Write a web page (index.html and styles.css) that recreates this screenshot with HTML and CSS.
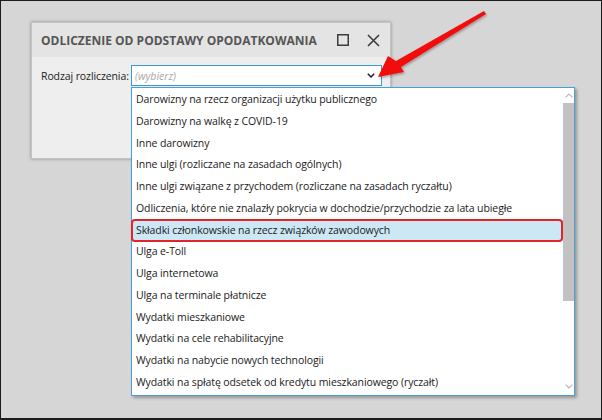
FILE: index.html
```html
<!DOCTYPE html>
<html lang="pl">
<head>
<meta charset="utf-8">
<title>Odliczenie od podstawy opodatkowania</title>
<link rel="stylesheet" href="styles.css">
</head>
<body>
<div class="screen">
  <div class="dialog">
    <div class="titlebar">
      <span class="title">ODLICZENIE OD PODSTAWY OPODATKOWANIA</span>
      <span class="controls">
        <svg width="12" height="12" viewBox="0 0 12 12"><rect x="0.75" y="0.75" width="10.5" height="10.5" fill="none" stroke="#3c3c3c" stroke-width="1.5"/></svg>
        <svg width="13" height="13" viewBox="0 0 13 13"><path d="M1 1 L12 12 M12 1 L1 12" stroke="#3c3c3c" stroke-width="1.6" fill="none"/></svg>
      </span>
    </div>
    <div class="form-row">
      <span class="label">Rodzaj rozliczenia:</span>
      <div class="combo">
        <span class="placeholder">(wybierz)</span>
        <svg class="chevron" width="8" height="5" viewBox="0 0 8 5"><path d="M0.8 0.8 L4 4 L7.2 0.8" stroke="#222" stroke-width="1.5" fill="none"/></svg>
      </div>
    </div>
  </div>

  <div class="dropdown">
    <ul class="items">
      <li>Darowizny na rzecz organizacji użytku publicznego</li>
      <li>Darowizny na walkę z COVID-19</li>
      <li>Inne darowizny</li>
      <li>Inne ulgi (rozliczane na zasadach ogólnych)</li>
      <li>Inne ulgi związane z przychodem (rozliczane na zasadach ryczałtu)</li>
      <li>Odliczenia, które nie znalazły pokrycia w dochodzie/przychodzie za lata ubiegłe</li>
      <li class="selected">Składki członkowskie na rzecz związków zawodowych</li>
      <li>Ulga e-Toll</li>
      <li>Ulga internetowa</li>
      <li>Ulga na terminale płatnicze</li>
      <li>Wydatki mieszkaniowe</li>
      <li>Wydatki na cele rehabilitacyjne</li>
      <li>Wydatki na nabycie nowych technologii</li>
      <li>Wydatki na spłatę odsetek od kredytu mieszkaniowego (ryczałt)</li>
    </ul>
    <div class="scrollbar">
      <svg class="sb-arrow" width="8" height="5" viewBox="0 0 8 5"><path d="M0.6 4.4 L4 1 L7.4 4.4" stroke="#b8b8b8" stroke-width="1.2" fill="none"/></svg>
      <div class="thumb"></div>
      <svg class="sb-arrow down" width="8" height="5" viewBox="0 0 8 5"><path d="M0.6 0.6 L4 4 L7.4 0.6" stroke="#b8b8b8" stroke-width="1.2" fill="none"/></svg>
    </div>
  </div>

  <svg class="arrow" width="602" height="420" viewBox="0 0 602 420">
    <defs>
      <filter id="sh" x="-10%" y="-10%" width="130%" height="130%">
        <feDropShadow dx="1" dy="1.5" stdDeviation="1.2" flood-color="#000" flood-opacity="0.3"/>
      </filter>
    </defs>
    <polygon points="378,77 388,56 396,61 484,11 486,14 401,67 404,72" fill="#f20d0d" filter="url(#sh)"/>
  </svg>
</div>
</body>
</html>
```
FILE: styles.css
```css
html, body {
	margin: 0;
	padding: 0;
}
body {
	background: #d5d5d5;
	font-family: "Open Sans", "Noto Sans", sans-serif;
}
.screen {
	position: relative;
	width: 602px;
	height: 420px;
	box-sizing: border-box;
	border: 1px solid #1c1c1c;
	border-bottom-width: 2px;
	background: #d6d6d6;
	overflow: hidden;
}

/* dialog window */
.dialog {
	margin: 21px 0 0 30px;
	width: 360px;
	height: 137px;
	box-sizing: border-box;
	border: 1px solid #c4c4c4;
	background: #eeeeee;
	box-shadow: 0 0 3px rgba(0, 0, 0, 0.35);
}
.titlebar {
	height: 34px;
	background: #e4e4e4;
	display: flex;
	align-items: center;
	justify-content: space-between;
	padding: 0 9px;
}
.title {
	font-size: 12px;
	font-weight: bold;
	color: #555555;
}
.controls {
	display: flex;
	align-items: center;
	gap: 18px;
	padding-right: 1px;
}
.form-row {
	display: flex;
	align-items: center;
	padding: 8px 0 0 9px;
}
.label {
	width: 90px;
	flex-shrink: 0;
	white-space: nowrap;
	font-size: 10.5px;
	letter-spacing: -0.1px;
	color: #222222;
}
.combo {
	width: 251px;
	height: 21px;
	box-sizing: border-box;
	border: 1px solid #3b97dc;
	background: #ffffff;
	display: flex;
	align-items: center;
	justify-content: space-between;
	padding: 0 6px 0 3px;
}
.placeholder {
	font-size: 10.5px;
	font-style: italic;
	color: #a9a9a9;
}

/* open dropdown list */
.dropdown {
	position: absolute;
	left: 130px;
	top: 86px;
	width: 444px;
	height: 309px;
	box-sizing: border-box;
	border: 1px solid #4a9fd6;
	background: #ffffff;
	box-shadow: 2px 2px 3px rgba(0, 0, 0, 0.3);
	display: flex;
}
.items {
	list-style: none;
	margin: 1px 0 0 0;
	padding: 0;
	flex: 1;
}
.items li {
	height: 21.77px;
	line-height: 21.77px;
	padding-left: 4px;
	font-size: 10.5px;
	letter-spacing: -0.1px;
	color: #1a1a1a;
	white-space: nowrap;
}
.items li.selected {
	position: relative;
	background: #cde8f5;
}
.items li.selected::after {
	content: "";
	position: absolute;
	left: -1px;
	right: 0;
	top: -1px;
	bottom: -1px;
	border: 2px solid #e3242b;
	border-radius: 4px;
}
.scrollbar {
	width: 11px;
	display: flex;
	flex-direction: column;
	align-items: center;
	padding-top: 5px;
}
.sb-arrow {
	display: block;
}
.thumb {
	width: 11px;
	height: 198px;
	margin-top: 5px;
	background: #c2c2c2;
}
.sb-arrow.down {
	margin-top: auto;
	margin-bottom: 6px;
}

/* red pointer arrow */
.arrow {
	position: absolute;
	left: -1px;
	top: -1px;
	pointer-events: none;
}
```
